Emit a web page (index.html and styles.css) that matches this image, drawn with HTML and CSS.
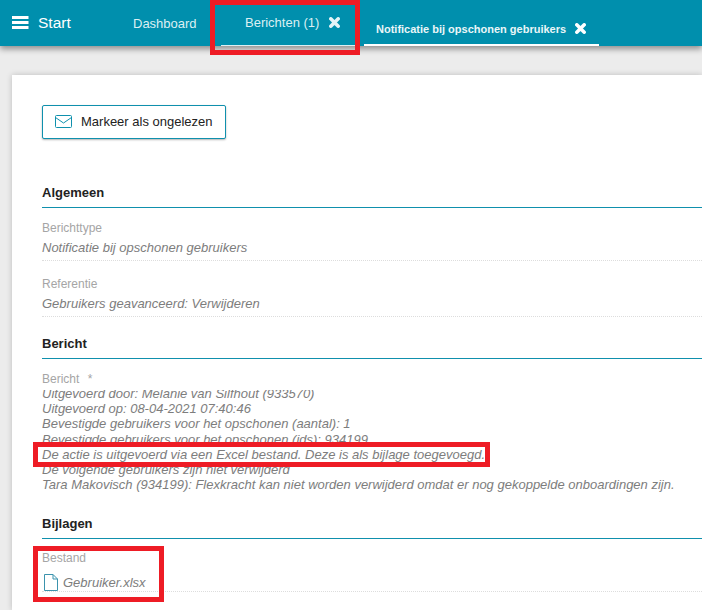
FILE: index.html
```html
<!DOCTYPE html>
<html lang="nl">
<head>
  <meta charset="UTF-8" />
  <title>Berichten</title>
  <link rel="stylesheet" href="styles.css">
</head>
<body>

  <div class="topbar">
    <div class="start">
      <svg class="burger" width="17" height="13" viewBox="0 0 17 13"><path d="M0 0h16.500v3H0zM0 5h16.500v3H0zM0 10h16.500v3H0z" fill="#fff"/></svg>
      <span>Start</span>
    </div>
    <div class="tab tab-dashboard">Dashboard</div>
    <div class="tab tab-berichten">
      <span>Berichten (1)</span>
      <svg class="close" width="11" height="11" viewBox="0 0 11 11"><path d="M1.800 1.800l7.400 7.400M9.200 1.800l-7.400 7.400" stroke="#e4f3f6" stroke-width="3.500" stroke-linecap="round"/></svg>
    </div>
    <div class="tab tab-notificatie">
      <span>Notificatie bij opschonen gebruikers</span>
      <svg class="close" width="11" height="11" viewBox="0 0 11 11"><path d="M1.800 1.800l7.400 7.400M9.200 1.800l-7.400 7.400" stroke="#fff" stroke-width="3.500" stroke-linecap="round"/></svg>
    </div>
  </div>

  <div class="card">
    <button class="btn">
      <svg width="17" height="13" viewBox="0 0 17 13" fill="none" stroke="#0f90ad" stroke-width="1"><rect x="0.500" y="0.500" width="16" height="12" rx="1"/><path d="M0.500 2.500l8 5.500 8-5.500"/></svg>
      Markeer als ongelezen
    </button>

    <h3 class="section first">Algemeen</h3>
    <div class="field">
      <div class="label">Berichttype</div>
      <div class="value">Notificatie bij opschonen gebruikers</div>
    </div>
    <div class="field">
      <div class="label">Referentie</div>
      <div class="value">Gebruikers geavanceerd: Verwijderen</div>
    </div>

    <h3 class="section">Bericht</h3>
    <div class="label label-msg">Bericht <span class="star">*</span></div>
    <div class="message">
      <div class="message-inner">
        <div>Uitgevoerd door: Melanie van Silfhout (933570)</div>
        <div>Uitgevoerd op: 08-04-2021 07:40:46</div>
        <div>Bevestigde gebruikers voor het opschonen (aantal): 1</div>
        <div>Bevestigde gebruikers voor het opschonen (ids): 934199</div>
        <div>De actie is uitgevoerd via een Excel bestand. Deze is als bijlage toegevoegd.</div>
        <div>De volgende gebruikers zijn niet verwijderd</div>
        <div>Tara Makovisch (934199): Flexkracht kan niet worden verwijderd omdat er nog gekoppelde onboardingen zijn.</div>
      </div>
    </div>

    <h3 class="section">Bijlagen</h3>
    <div class="field field-file">
      <div class="label">Bestand</div>
      <div class="value file">
        <svg width="14" height="17" viewBox="0 0 14 17" fill="none" stroke="#3b93ad" stroke-width="1"><path d="M0.500 0.500h8.500l4.500 4.500v11.500h-13zM9 0.500v4.500h4.500"/></svg>
        Gebruiker.xlsx
      </div>
    </div>
  </div>

  <!-- rode kaders uit de schermafbeelding -->
  <div class="mark mark-tab"></div>
  <div class="mark mark-line"></div>
  <div class="mark mark-file"></div>

</body>
</html>
```

FILE: styles.css
```css
html, body {
  margin: 0;
  height: 610px;
  overflow: hidden;
}
body {
  font-family: "Liberation Sans", Arial, sans-serif;
  background: #ececec;
  color: #222;
  position: relative;
}
.topbar {
  display: flex;
  align-items: stretch;
  height: 46px;
  background: #008fad;
  box-shadow: 0 3px 6px rgba(0,0,0,0.4);
  color: #fff;
}
.start {
  display: flex;
  align-items: center;
  width: 133px;
  padding-left: 12px;
  padding-bottom: 1px;
  box-sizing: border-box;
  font-size: 15.500px;
}
.burger {
  margin-right: 9px;
}
.tab {
  display: flex;
  align-items: center;
  box-sizing: border-box;
  color: #dceff3;
  font-size: 13px;
}
.tab-dashboard {
  width: 88px;
}
.tab-berichten {
  width: 134px;
  padding-left: 24px;
  border-bottom: 1px solid #dceff3;
}
.tab-berichten .close {
  margin-left: 10px;
}
.tab-notificatie {
  margin-left: 9px;
  width: 235px;
  padding-left: 12px;
  padding-top: 13px;
  font-size: 11px;
  font-weight: bold;
  color: #eaf6f8;
  border-bottom: 2px solid #fff;
  white-space: nowrap;
}
.tab-notificatie .close {
  margin-left: 9px;
}
.card {
  margin: 29px 0 0 12px;
  padding: 30px 0 0 30px;
  height: 535px;
  box-sizing: border-box;
  background: #fff;
  box-shadow: 0 0 6px rgba(0,0,0,0.2);
}
.btn {
  display: flex;
  align-items: center;
  width: 184px;
  height: 34px;
  padding: 0 0 2px 12px;
  background: #fff;
  border: 1px solid #0f90ad;
  border-radius: 2px;
  box-shadow: 0 1px 2px rgba(0,0,0,0.3);
  font-family: inherit;
  font-size: 13px;
  color: #222;
  gap: 9px;
}
.section {
  margin: 0;
  padding: 19px 0 6px;
  font-size: 13px;
  line-height: 16px;
  font-weight: bold;
  color: #222;
  border-bottom: 1px solid #0f90ad;
}
.section.first {
  margin-top: 27px;
}
.field {
  margin-top: 10px;
  padding-top: 3px;
  padding-bottom: 4px;
  border-bottom: 1px dotted #ddd;
}
.field + .field {
  margin-top: 13px;
}
.label {
  font-size: 12px;
  line-height: 14px;
  color: #a5a5a5;
}
.value {
  margin-top: 5px;
  font-size: 13px;
  line-height: 16px;
  font-style: italic;
  color: #7d7d7d;
}
.label-msg {
  margin-top: 11px;
  padding-top: 2px;
}
.star {
  margin-left: 5px;
}
.message {
  margin-top: 4px;
  height: 107px;
  overflow: hidden;
  font-size: 13px;
  line-height: 15.200px;
  font-style: italic;
  color: #7d7d7d;
  white-space: nowrap;
}
.message-inner {
  margin-top: -4px;
}
.field-file {
  margin-top: 9px;
  padding-bottom: 0;
}
.file {
  display: flex;
  align-items: center;
  gap: 5px;
  margin-top: 9px;
  margin-left: 2px;
}
.mark {
  position: absolute;
  box-sizing: border-box;
  border: 5px solid #ee1c25;
}
.mark-tab {
  left: 210px;
  top: 0;
  width: 150px;
  height: 55px;
}
.mark-line {
  left: 33px;
  top: 442px;
  width: 457px;
  height: 25px;
}
.mark-file {
  left: 33px;
  top: 546px;
  width: 131px;
  height: 56px;
}
```
